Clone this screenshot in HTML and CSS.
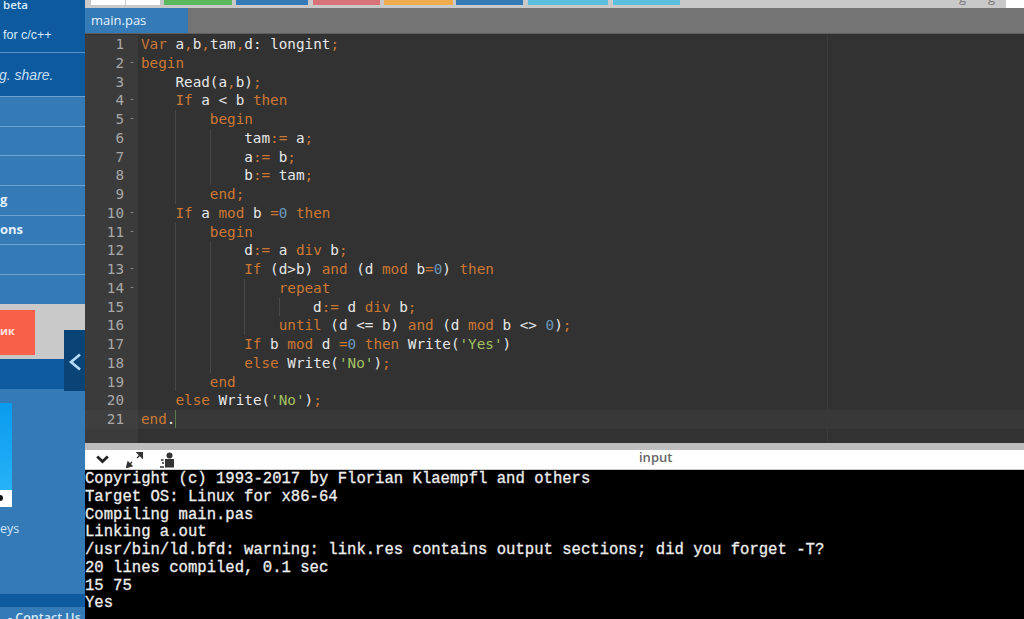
FILE: index.html
```html
<!DOCTYPE html>
<html lang="en">
<head>
<meta charset="utf-8">
<title>main.pas</title>
<link rel="stylesheet" href="styles.css">
</head>
<body>
<div class="page">
  <aside class="side">
    <div class="dark-block">
      <div class="row-beta">beta</div>
      <div class="row-for">for c/c++</div>
      <div class="row-share">g. share.</div>
    </div>
    <div class="nav">
      <div class="nav-row"></div>
      <div class="nav-row"></div>
      <div class="nav-row"></div>
      <div class="nav-row">g</div>
      <div class="nav-row">ons</div>
      <div class="nav-row"></div>
      <div class="nav-row"></div>
    </div>
    <div class="grey-block"><div class="cta">ик</div></div>
    <div class="dark-strip"></div>
    <div class="promo">
      <div class="promo-img"><div class="promo-foot"><span class="promo-dot"></span></div></div>
      <div class="promo-text">eys</div>
    </div>
    <div class="foot-strip"></div>
    <div class="foot">- Contact Us</div>
    <div class="toggle">
      <svg width="14" height="18" viewBox="0 0 14 18"><path d="M12 1.500 3 9l9 7.500" fill="none" stroke="#b5dcf7" stroke-width="2.600"/></svg>
    </div>
  </aside>
  <main class="main">
    <div class="topbar">
      <span class="tb tb-w1"></span><span class="tb tb-w2"></span>
      <span class="tb tb-green"></span><span class="tb tb-blue"></span><span class="tb tb-red"></span><span class="tb tb-orange"></span><span class="tb tb-blue2"></span><span class="tb tb-cyan"></span><span class="tb tb-cyan2"></span>
      <span class="tb-spacer"></span>
      <span class="tb-text">g</span><span class="tb-text tb-text2">g</span>
      <span class="tb-white"></span>
    </div>
    <div class="tabbar"><div class="tab">main.pas</div></div>
    <div class="editor">
      <div class="gutter">
        <div class="gl">1</div>
        <div class="gl fold">2</div>
        <div class="gl">3</div>
        <div class="gl fold">4</div>
        <div class="gl fold">5</div>
        <div class="gl">6</div>
        <div class="gl">7</div>
        <div class="gl">8</div>
        <div class="gl">9</div>
        <div class="gl fold">10</div>
        <div class="gl fold">11</div>
        <div class="gl">12</div>
        <div class="gl fold">13</div>
        <div class="gl fold">14</div>
        <div class="gl">15</div>
        <div class="gl">16</div>
        <div class="gl">17</div>
        <div class="gl">18</div>
        <div class="gl">19</div>
        <div class="gl">20</div>
        <div class="gl gl-active">21</div>
      </div>
      <div class="code">
        <div class="margin"></div>
        <div class="cl"><b>Var</b> a<b>,</b>b<b>,</b>tam<b>,</b>d: longint<b>;</b></div>
        <div class="cl"><b>begin</b></div>
        <div class="cl"><i></i>Read(a<b>,</b>b)<b>;</b></div>
        <div class="cl"><i></i><b>If</b> a &lt; b <b>then</b></div>
        <div class="cl"><i></i><i class="g"></i><b>begin</b></div>
        <div class="cl"><i></i><i class="g"></i><i class="g"></i>tam<b>:=</b> a<b>;</b></div>
        <div class="cl"><i></i><i class="g"></i><i class="g"></i>a<b>:=</b> b<b>;</b></div>
        <div class="cl"><i></i><i class="g"></i><i class="g"></i>b<b>:=</b> tam<b>;</b></div>
        <div class="cl"><i></i><i class="g"></i><b>end;</b></div>
        <div class="cl"><i></i><b>If</b> a <b>mod</b> b <b>=</b><u>0</u> <b>then</b></div>
        <div class="cl"><i></i><i class="g"></i><b>begin</b></div>
        <div class="cl"><i></i><i class="g"></i><i class="g"></i>d<b>:=</b> a <b>div</b> b<b>;</b></div>
        <div class="cl"><i></i><i class="g"></i><i class="g"></i><b>If</b> (d&gt;b) <b>and</b> (d <b>mod</b> b<b>=</b><u>0</u>) <b>then</b></div>
        <div class="cl"><i></i><i class="g"></i><i class="g"></i><i class="g"></i><b>repeat</b></div>
        <div class="cl"><i></i><i class="g"></i><i class="g"></i><i class="g"></i><i class="g"></i>d<b>:=</b> d <b>div</b> b<b>;</b></div>
        <div class="cl"><i></i><i class="g"></i><i class="g"></i><i class="g"></i><b>until</b> (d &lt;= b) <b>and</b> (d <b>mod</b> b &lt;&gt; <u>0</u>)<b>;</b></div>
        <div class="cl"><i></i><i class="g"></i><i class="g"></i><b>If</b> b <b>mod</b> d <b>=</b><u>0</u> <b>then</b> Write(<s>'Yes'</s>)</div>
        <div class="cl"><i></i><i class="g"></i><i class="g"></i><b>else</b> Write(<s>'No'</s>)<b>;</b></div>
        <div class="cl"><i></i><i class="g"></i><b>end</b></div>
        <div class="cl"><i></i><b>else</b> Write(<s>'No'</s>)<b>;</b></div>
        <div class="cl cl-active"><b>end</b>.<span class="caret"></span></div>
      </div>
    </div>
    <div class="splitter"></div>
    <div class="toolbar">
      <div class="tools">
        <svg width="13" height="9" viewBox="0 0 13 9"><path d="M1.200 1.500 6.500 6.500 11.800 1.500" fill="none" stroke="#222" stroke-width="2.800"/></svg>
        <svg width="17" height="16" viewBox="0 0 17 16"><path d="M11 .5h5.500V6zM.5 15.500 2 10l4 4zM4 12l2-2M11 6l2.500-2.500" fill="#333" stroke="#333" stroke-width="1.300"/></svg>
        <svg width="14" height="16" viewBox="0 0 14 16"><circle cx="9.500" cy="3.500" r="3" fill="#333"/><path d="M5 7h9v8.500H5z" fill="#333"/><path d="M1 8h2.500M2 11h2M0 15h4" fill="none" stroke="#333" stroke-width="1.400"/></svg>
      </div>
      <div class="input-label">input</div>
    </div>
    <pre class="console">Copyright (c) 1993-2017 by Florian Klaempfl and others
Target OS: Linux for x86-64
Compiling main.pas
Linking a.out
/usr/bin/ld.bfd: warning: link.res contains output sections; did you forget -T?
20 lines compiled, 0.1 sec
15 75
Yes</pre>
  </main>
</div>
</body>
</html>
```
FILE: styles.css
```css
* { box-sizing: border-box; }
html, body { margin: 0; height: 100%; overflow: hidden; }
body { font-family: "Open Sans", "Liberation Sans", sans-serif; background: #000; }
.page { display: flex; width: 1024px; height: 619px; overflow: hidden; }

/* sidebar */
.side { position: relative; width: 85px; flex: none; height: 619px; background: #337ab7; color: #d8ecfa; font-size: 12px; display: flex; flex-direction: column; overflow: hidden; }
.dark-block { height: 96px; background: #0d5a9e; flex: none; }
.row-beta { height: 12px; line-height: 9px; padding-left: 3px; font-weight: 600; font-size: 11.500px; }
.row-for { height: 41px; padding: 16px 0 0 3px; line-height: 14px; border-bottom: 1px solid #5b94c6; font-family: "Liberation Sans", sans-serif; font-size: 12.500px; }
.row-share { height: 43px; padding: 14px 0 0 0; line-height: 16px; font-size: 14px; font-style: italic; margin-left: -1px; color: #c5dff3; font-family: "Liberation Sans", sans-serif; }
.nav { flex: none; }
.nav-row { height: 29.700px; border-top: 1px solid #6da3d1; font-weight: 700; font-size: 13px; line-height: 27px; color: #e3f1fb; }
.grey-block { height: 55px; background: #c9c9c9; flex: none; padding-top: 6px; }
.cta { width: 35px; height: 45px; background: #f9604a; color: #ffe3dc; font-weight: 700; font-size: 11px; line-height: 42px; text-align: right; padding-right: 21px; }
.dark-strip { height: 30px; background: #0d5a9e; flex: none; }
.promo { height: 205px; flex: none; padding-top: 14px; }
.promo-img { width: 12px; height: 104px; background: linear-gradient(#0b9bef, #2ab6f7); display: flex; flex-direction: column; justify-content: flex-end; }
.promo-foot { height: 17px; background: #fff; display: flex; align-items: center; }
.promo-dot { width: 3px; height: 6px; border-radius: 0 3px 3px 0; background: #111; }
.promo-text { margin-top: 14px; font-size: 12.500px; line-height: 16px; color: #cfe5f6; }
.foot-strip { height: 13px; background: #0d5a9e; flex: none; }
.foot { font-size: 12.500px; padding-left: 8px; line-height: 14px; font-weight: 600; white-space: nowrap; margin-top: 4px; }
.toggle { position: absolute; left: 64px; top: 330px; width: 21px; height: 61px; background: #0a4477; display: flex; align-items: center; justify-content: center; padding-top: 3px; }

/* main column */
.main { flex: 1; min-width: 0; display: flex; flex-direction: column; height: 619px; }
.topbar { height: 8px; flex: none; background: #c9c9c9; display: flex; align-items: flex-start; overflow: hidden; }
.tb { display: block; height: 5px; }
.tb-w1 { width: 34px; margin-left: 6px; background: #fff; }
.tb-w2 { width: 34px; margin-left: 1px; background: #fff; }
.tb-green { width: 68px; margin-left: 4px; background: #5cb85c; }
.tb-blue { width: 72px; margin-left: 4px; background: #337ab7; }
.tb-red { width: 67px; margin-left: 5px; background: #d9737a; }
.tb-orange { width: 69px; margin-left: 4px; background: #f0ad4e; }
.tb-blue2 { width: 67px; margin-left: 3px; background: #337ab7; }
.tb-cyan { width: 80px; margin-left: 5px; background: #5bc0de; }
.tb-cyan2 { width: 67px; margin-left: 5px; background: #5bc0de; }
.tb-spacer { flex: 1; }
.tb-text { font-size: 13px; line-height: 13px; height: 13px; margin-top: -9px; color: #777; }
.tb-text2 { margin-left: 22px; margin-right: 11px; }
.tb-white { width: 18px; height: 8px; background: #fff; }
.tabbar { height: 26px; flex: none; background: #757575; display: flex; border-bottom: 1px solid #5d5d5d; }
.tab { width: 103px; background: #337ab7; color: #e6f2fb; font-size: 13px; line-height: 24px; padding-left: 6px; }

.editor { height: 409px; flex: none; display: flex; background: #323232; font-family: "DejaVu Sans Mono", monospace; font-size: 14.300px; line-height: 18.750px; padding-top: 1px; overflow: hidden; }
.gutter { width: 53px; flex: none; background: #3b3b3b; color: #a8a8a8; height: 100%; }
.gl { height: 18.750px; text-align: right; padding-right: 14px; position: relative; }
.gl.fold::after { content: "-"; position: absolute; right: 3px; top: -1px; font-size: 10px; color: #8b8b8b; }
.gl-active { background: #3f3f3f; }
.code { flex: 1; position: relative; min-width: 0; }
.margin { position: absolute; left: 689px; top: -1px; bottom: 0; width: 1px; background: #3a3a3a; }
.cl { height: 18.750px; padding-left: 3px; color: #e8e8e8; white-space: pre; }
.cl-active { background: #383838; }
.cl b { font-weight: 400; color: #cc7833; }
.cl u { text-decoration: none; color: #6c99bb; }
.cl s { text-decoration: none; color: #a5c261; }
.cl i { display: inline-block; width: 4ch; height: 18.750px; vertical-align: top; }
.cl i.g { box-shadow: inset 1px 0 0 #484848; }
.caret { display: inline-block; width: 1px; height: 18px; background: #5a7a50; vertical-align: top; }

.splitter { height: 7px; flex: none; background: #bdbdbd; }
.toolbar { height: 20px; flex: none; background: #fff; position: relative; border-bottom: 1px solid #ccc; display: flex; align-items: center; }
.tools { display: flex; align-items: center; gap: 17px; padding-left: 11px; }
.input-label { margin-left: 465px; color: #666; font-size: 13px; font-weight: 600; line-height: 14px; margin-top: -5px; }
.console { flex: 1; margin: 0; padding-top: 1px; background: #000; color: #eee; font-family: "Liberation Mono", monospace; font-size: 15.600px; line-height: 17.750px; overflow: hidden; -webkit-text-stroke: 0.3px #eee; }
```
